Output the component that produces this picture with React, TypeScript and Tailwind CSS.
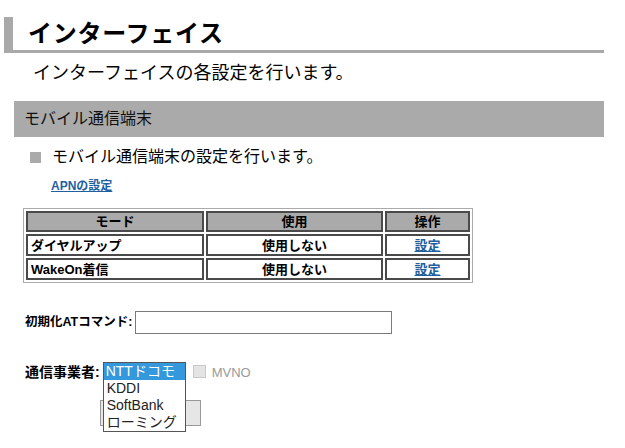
import React from "react";

const font = { fontFamily: '"Liberation Sans", "Noto Sans CJK JP", sans-serif' };

export default function App() {
  return (
    <div className="w-[625px] h-[448px] bg-white relative overflow-hidden text-black" style={font}>
      {/* Title */}
      <div className="mt-[17px] ml-[4px] w-[600px] h-[36px] border-l-[9px] border-b-[3px] border-[#a9a9a9] flex items-center pl-[15px]">
        <span className="text-[24px] font-bold leading-none tracking-[0.75px]">インターフェイス</span>
      </div>
      <div className="mt-[9px] pl-[33px] h-[22px] flex items-center text-[18px] leading-none">
        インターフェイスの各設定を行います。
      </div>

      {/* Section header */}
      <div className="mt-[17px] ml-[14px] w-[590px] h-[36px] bg-[#aaaaaa] flex items-center pl-[10px] text-[16px] text-[#111]">
        モバイル通信端末
      </div>

      <div className="mt-[11px] ml-[30px] h-[18px] flex items-center">
        <div className="w-[11px] h-[11px] bg-[#aaaaaa]" />
        <span className="ml-[11px] text-[16px] leading-none">モバイル通信端末の設定を行います。</span>
      </div>

      <div className="mt-[12px] ml-[51px] h-[16px] flex items-center">
        <a className="text-[12px] font-bold text-[#1f5fa0] underline leading-none">APNの設定</a>
      </div>

      {/* Table */}
      <table className="mt-[14px] ml-[23px] w-[450px] border border-[#aaaaaa] border-separate border-spacing-[2px] text-[13px]">
        <tbody>
          <tr className="h-[21px] bg-[#aaaaaa] font-bold">
            <td className="w-[178px] border-2 border-[#4a4a4a] text-center leading-none">モード</td>
            <td className="w-[177px] border-2 border-[#4a4a4a] text-center leading-none">使用</td>
            <td className="border-2 border-[#4a4a4a] text-center leading-none">操作</td>
          </tr>
          <tr className="h-[22px] font-bold">
            <td className="border-2 border-[#4a4a4a] pl-[3px] leading-none">ダイヤルアップ</td>
            <td className="border-2 border-[#4a4a4a] text-center leading-none">使用しない</td>
            <td className="border-2 border-[#4a4a4a] text-center leading-none">
              <a className="text-[#1f5fa0] underline">設定</a>
            </td>
          </tr>
          <tr className="h-[22px] font-bold">
            <td className="border-2 border-[#4a4a4a] pl-[3px] leading-none">WakeOn着信</td>
            <td className="border-2 border-[#4a4a4a] text-center leading-none">使用しない</td>
            <td className="border-2 border-[#4a4a4a] text-center leading-none">
              <a className="text-[#1f5fa0] underline">設定</a>
            </td>
          </tr>
        </tbody>
      </table>

      {/* AT command */}
      <div className="mt-[28px] ml-[25px] flex items-center">
        <span className="text-[12.5px] font-bold">初期化ATコマンド:</span>
        <div className="ml-[3px] w-[257px] h-[23px] border border-[#7a7a7a] bg-white" />
      </div>

      {/* Carrier */}
      <div className="mt-[28px] ml-[25px] flex items-start">
        <span className="text-[14px] font-bold h-[20px] flex items-center">通信事業者:</span>
        <div className="relative ml-[3px] w-[83px] h-[20px]">
          <div className="absolute left-0 top-0 z-10 w-[83px] border border-[#555] bg-white text-[14px] leading-[17px]">
            <div className="bg-[#3398dc] text-white pl-[2px]">NTTドコモ</div>
            <div className="pl-[3px] text-[#222]">KDDI</div>
            <div className="pl-[3px] text-[#222]">SoftBank</div>
            <div className="pl-[3px] text-[#222]">ローミング</div>
          </div>
        </div>
        <div className="ml-[7px] mt-[3px] w-[13px] h-[13px] border border-[#c8c8c8] bg-[#e4e4e4]" />
        <span className="ml-[6px] mt-[3px] text-[13px] text-[#999] leading-[15px]">MVNO</span>
      </div>
      <div className="mt-[18px] ml-[100px] w-[101px] h-[26px] border border-[#999] bg-[#e6e6e6]" />
    </div>
  );
}
